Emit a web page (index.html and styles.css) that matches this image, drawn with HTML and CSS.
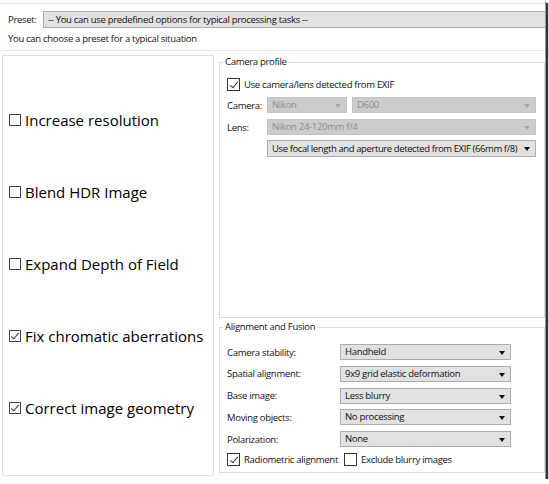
FILE: index.html
```html
<!DOCTYPE html>
<html lang="en">
<head>
<meta charset="UTF-8" />
<title>Processing options</title>
<link rel="stylesheet" href="styles.css">
</head>
<body>

<div class="window">
  <div class="preset-panel">
    <div class="preset-row">
      <span class="preset-label">Preset:</span>
      <div class="combo preset-combo">-- You can use predefined options for typical processing tasks --</div>
    </div>
    <div class="hint">You can choose a preset for a typical situation</div>
  </div>

  <div class="main">
    <div class="tasks">
      <div class="task"><span class="bigbox"></span>Increase resolution</div>
      <div class="task"><span class="bigbox"></span>Blend HDR Image</div>
      <div class="task"><span class="bigbox"></span>Expand Depth of Field</div>
      <div class="task"><span class="bigbox checked"></span>Fix chromatic aberrations</div>
      <div class="task"><span class="bigbox checked"></span>Correct image geometry</div>
    </div>

    <div class="side">
      <fieldset class="group camera">
        <legend>Camera profile</legend>
        <label class="check"><span class="box checked"></span>Use camera/lens detected from EXIF</label>
        <div class="cam-row">
          <span class="cam-label">Camera:</span>
          <div class="combo disabled maker">Nikon</div>
          <div class="combo disabled model">D600</div>
        </div>
        <div class="cam-row">
          <span class="cam-label">Lens:</span>
          <div class="combo disabled wide">Nikon 24-120mm f/4</div>
        </div>
        <div class="cam-row focal">
          <span class="cam-label"></span>
          <div class="combo wide">Use focal length and aperture detected from EXIF (66mm f/8)</div>
        </div>
      </fieldset>

      <fieldset class="group align">
        <legend>Alignment and Fusion</legend>
        <div class="align-grid">
          <span>Camera stability:</span>
          <div class="combo">Handheld</div>
          <span>Spatial alignment:</span>
          <div class="combo">9x9 grid elastic deformation</div>
          <span>Base image:</span>
          <div class="combo">Less blurry</div>
          <span>Moving objects:</span>
          <div class="combo">No processing</div>
          <span>Polarization:</span>
          <div class="combo">None</div>
        </div>
        <div class="check-row">
          <label class="check"><span class="box checked"></span>Radiometric alignment</label>
          <label class="check"><span class="box"></span>Exclude blurry images</label>
        </div>
      </fieldset>
    </div>
  </div>
</div>

</body>
</html>
```

FILE: styles.css
```css
body {
  margin: 0;
  background: #fff;
  font-family: 'Open Sans', 'Noto Sans', sans-serif;
  font-size: 9.5px;
  letter-spacing: -0.3px;
  color: #111;
}
.window {
  width: 545px;
  height: 479px;
  background: #fff;
  box-shadow: 1px 1px 0 #999, 3px 3px 1px #333;
  overflow: hidden;
}
.preset-panel {
  margin-top: 3px;
  height: 46px;
  border-top: 1px solid #e6e6e6;
  border-bottom: 1px solid #e6e6e6;
  padding-left: 8px;
}
.preset-row {
  display: flex;
  align-items: center;
  margin-top: 7px;
}
.preset-label {
  width: 35px;
  flex-shrink: 0;
}
.combo {
  position: relative;
  height: 14px;
  line-height: 14px;
  padding: 0 4px;
  background: #e1e1e1;
  border: 1px solid #adadad;
  white-space: nowrap;
  overflow: hidden;
  min-width: 0;
}
.combo::after {
  content: '';
  position: absolute;
  right: 5px;
  top: 6px;
  border-left: 3.5px solid transparent;
  border-right: 3.5px solid transparent;
  border-top: 4px solid #111;
}
.preset-combo {
  flex: 1;
  height: 15px;
  line-height: 15px;
  margin-right: -4px;
}
.preset-combo::after {
  display: none;
}
.combo.disabled {
  background: #cccccc;
  border-color: #c4c4c4;
  color: #8d8d8d;
}
.combo.disabled::after {
  border-top-color: #a8a8a8;
}
.hint {
  margin-top: 4px;
}
.main {
  display: grid;
  grid-template-columns: 212px 1fr;
  column-gap: 5px;
  margin-top: 4px;
  margin-left: 2px;
}
.tasks {
  height: 391px;
  border: 1px solid #e0e0e0;
  padding-top: 28px;
}
.task {
  height: 72px;
  display: flex;
  align-items: center;
  padding-left: 6px;
  font-size: 15px;
  letter-spacing: 0;
  color: #000;
}
.bigbox {
  width: 10px;
  height: 10px;
  border: 1px solid #444;
  margin-right: 4px;
  flex-shrink: 0;
  position: relative;
}
.bigbox.checked::after,
.box.checked::after {
  content: '';
  position: absolute;
  left: 3px;
  top: 0px;
  width: 3px;
  height: 7px;
  border-right: 1px solid #333;
  border-bottom: 1px solid #333;
  transform: rotate(40deg);
}
.side {
  display: flex;
  flex-direction: column;
  gap: 3px;
}
.group {
  margin: 0;
  border: 1px solid #dcdcdc;
  padding: 0 0 0 7px;
  min-width: 0;
}
.group legend {
  padding: 0 2px;
  margin-left: -4px;
  line-height: 12px;
}
.camera {
  height: 260px;
  margin-top: 1px;
}
.check {
  display: flex;
  align-items: center;
  white-space: nowrap;
}
.box {
  width: 11px;
  height: 11px;
  border: 1px solid #333;
  background: #fff;
  margin-right: 4px;
  flex-shrink: 0;
  position: relative;
}
.box.checked::after {
  left: 4px;
  top: 1px;
  width: 3px;
  height: 7px;
}
.camera .check {
  margin-top: 10px;
}
.cam-row {
  display: flex;
  align-items: center;
  margin-top: 6px;
  width: 309px;
}
.cam-row.focal {
  margin-top: 5px;
}
.cam-row.focal .combo {
  height: 15px;
  line-height: 15px;
  letter-spacing: -0.4px;
}
.cam-label {
  width: 40px;
  flex-shrink: 0;
}
.maker {
  width: 70px;
  flex-shrink: 0;
  margin-right: 5px;
}
.model,
.wide {
  flex: 1;
}
.align {
  height: 150px;
}
.align-grid {
  display: grid;
  grid-template-columns: 113px 171px;
  row-gap: 5.75px;
  align-items: center;
  margin-top: 11px;
}
.check-row {
  display: flex;
  gap: 6px;
  margin-top: 6px;
}
```
